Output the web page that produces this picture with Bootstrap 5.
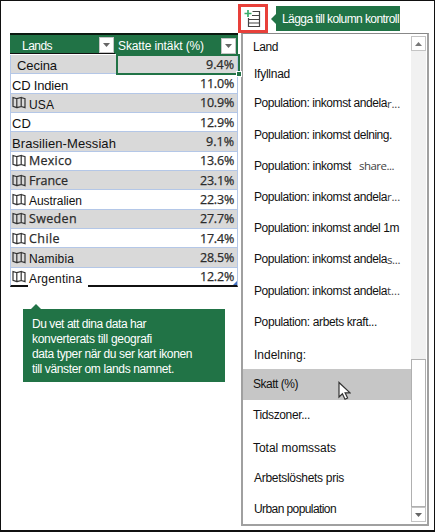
<!DOCTYPE html>
<html lang="sv">
  <head>
    <meta charset="UTF-8" />
    <meta name="viewport" content="width=device-width, initial-scale=1" />
    <title>Lands</title>
    <link
      href="https://cdn.jsdelivr.net/npm/bootstrap@5.3.3/dist/css/bootstrap.min.css"
      rel="stylesheet"
    />
    <style>
      body {
        width: 435px;
        height: 532px;
        font-family: "Liberation Sans", Arial, sans-serif;
        font-size: 12px;
        line-height: 1.2;
        color: #111;
        background: #fff;
      }

      .frame {
        width: 435px;
        height: 532px;
        border: 1px solid #111;
        border-bottom-width: 2px;
      }

      .green {
        background-color: #217346;
        color: #fff;
      }

      [data-w] {
        display: inline-block;
        white-space: pre;
      }

      /* top bar */
      .topbar {
        height: 32px;
        padding: 3px 0 0 237px;
      }

      .add-column {
        width: 30px;
        height: 29px;
        border: 3px solid #e8403a;
      }

      .arrow-left {
        border: 5px solid transparent;
        border-right: 5px solid #217346;
        border-left: 0;
        margin-left: 3px;
      }

      .tip-top {
        width: 124px;
        height: 25px;
        padding: 2px 0 0 6px;
      }

      /* table */
      .sheet {
        width: 228px;
        margin-left: 9px;
      }

      .sheet-head {
        height: 21px;
        border-top: 2px solid #0b1a11;
        margin-bottom: 1px;
      }

      .head-name {
        width: 105px;
        padding: 2px 1px 0 12px;
        border-bottom: 1px solid #111;
      }

      .head-value {
        width: 123px;
        padding: 2px 2px 0 3px;
      }

      .head-name span,
      .head-value span {
        padding-top: 2px;
      }

      .filter-btn {
        width: 15px;
        height: 16px;
        background: #fff;
        border: 1px solid #c5c5c5;
      }

      .sheet-row {
        height: 19.35px;
        border: 1px solid #b4c7e7;
        border-top: 0;
        padding: 0 3px 0 1px;
      }

      .sheet-row:nth-child(even) {
        background: #d9d9d9;
      }

      .sheet-row:last-child {
        border-bottom: 2px solid #111;
      }

      .sheet-row .office,
      .sheet-row .value {
        font-family: "Open Sans", "Noto Sans", sans-serif;
        font-size: 12.5px;
        color: #2b2b2b;
        -webkit-text-stroke: 0.25px #2b2b2b;
      }

      .big-name {
        font-size: 13px;
      }

      .map-icon {
        width: 14px;
        height: 13px;
        margin-right: 3px;
      }

      .push-down {
        padding-top: 4px;
      }

      .first-name {
        padding-left: 5px;
      }

      .active-cell {
        left: 105px;
        top: -1px;
        width: 124px;
        height: 21px;
        border: 2px solid #217346;
      }

      .cell-handle {
        right: -4px;
        bottom: -4px;
        width: 6px;
        height: 6px;
        border: 1px solid #fff;
        background: #217346;
      }

      .range-corner {
        right: 0;
        bottom: 0;
        border: 2px solid #4472c4;
        border-top-color: transparent;
        border-left-color: transparent;
      }

      /* name that runs over the table's bottom rule */
      .over-rule {
        left: 17px;
        top: 3px;
        width: 60px;
        height: 18px;
        padding: 1px 0 0 1px;
        background: #fff;
      }

      .arrow-up {
        width: 0;
        border: 5px solid transparent;
        border-bottom: 5px solid #217346;
        border-top: 0;
        margin: 17px 0 0 22px;
      }

      .tip-map {
        width: 202px;
        height: 73px;
        margin-left: 14px;
        padding: 8px 0 0 9px;
        line-height: 15px;
      }

      /* field list */
      .fields {
        width: 188px;
        height: 493px;
        margin-left: 3px;
        border: 2px solid #a0a0a0;
        border-top: 1px solid #888;
      }

      .field-item {
        height: 31.2px;
        padding-left: 11px;
      }

      .field-first {
        height: 26px;
        padding-left: 10px;
      }

      .field-second {
        height: 28px;
      }

      .field-low {
        padding-left: 10px;
      }

      .field-selected {
        background: #c6c6c6;
      }

      .cut-off {
        font-family: "Open Sans", "Noto Sans", sans-serif;
        font-size: 11.5px;
        color: #444;
      }

      .scroll-track {
        width: 15px;
        margin: 2px 1px 2px 0;
        background: #f1f1f1;
      }

      .scroll-btn {
        height: 15px;
        background: #fff;
        border: 1px solid #c4c4c4;
      }

      .scroll-thumb {
        height: 148px;
        background: #fff;
        border: 1px solid #b0b0b0;
      }

      .pointer {
        left: 337px;
        top: 380px;
      }
    </style>
  </head>
  <body>
    <svg class="d-none">
      <symbol id="map" viewBox="0 0 14 13">
        <path
          d="M1 1.5 4.8 2.6v9L1 10.4zM4.8 2.6 9.2 1.5v9L4.8 11.6M9.2 1.5 13 2.6v9l-3.8-1.1"
          fill="none"
          stroke="#333"
          stroke-width="1.2"
        />
      </symbol>
    </svg>

    <div class="frame position-relative">
      <div class="topbar d-flex">
        <div class="add-column d-flex align-items-center justify-content-center">
          <svg width="18" height="19" viewBox="0 0 18 19" fill="none">
            <path
              d="M8.5 2.5H15.5V17.5H4.5V9M8 6.5h7.5M4.5 10.5h11M4.5 14h11"
              stroke="#444"
              stroke-width="1.2"
            />
            <path d="M4 1v7M0.5 4.5h7" stroke="#3aae6b" stroke-width="1.7" />
          </svg>
        </div>
        <div class="d-flex align-items-center">
          <div class="arrow-left"></div>
          <div class="tip-top green d-flex align-items-center">
            <span data-w="117">Lägga till kolumn kontroll</span>
          </div>
        </div>
      </div>

      <div class="d-flex align-items-start">
        <div>
          <div class="sheet">
            <div class="sheet-head green d-flex">
              <div class="head-name d-flex justify-content-between align-items-center">
                <span data-w="30">Lands</span>
                <div class="filter-btn d-flex align-items-center justify-content-center">
                  <svg width="7" height="4"><path d="M0 0h7L3.5 4z" fill="#666" /></svg>
                </div>
              </div>
              <div class="head-value d-flex justify-content-between align-items-center">
                <span data-w="86">Skatte intäkt (%)</span>
                <div class="filter-btn d-flex align-items-center justify-content-center">
                  <svg width="7" height="4"><path d="M0 0h7L3.5 4z" fill="#666" /></svg>
                </div>
              </div>
            </div>

            <div class="sheet-row position-relative d-flex align-items-center">
              <div class="flex-grow-1 first-name push-down"><span class="big-name" data-w="40">Cecina</span></div>
              <span class="value" data-w="28">9.4%</span>
              <div class="active-cell position-absolute">
                <div class="cell-handle position-absolute"></div>
              </div>
            </div>
            <div class="sheet-row d-flex align-items-center">
              <div class="flex-grow-1 push-down"><span class="big-name" data-w="56">CD Indien</span></div>
              <span class="value" data-w="34">11.0%</span>
            </div>
            <div class="sheet-row d-flex align-items-center">
              <svg class="map-icon"><use href="#map" /></svg>
              <div class="flex-grow-1 push-down"><span data-w="25">USA</span></div>
              <span class="value" data-w="34">10.9%</span>
            </div>
            <div class="sheet-row d-flex align-items-center">
              <div class="flex-grow-1 push-down"><span class="big-name" data-w="19">CD</span></div>
              <span class="value" data-w="34">12.9%</span>
            </div>
            <div class="sheet-row d-flex align-items-center">
              <div class="flex-grow-1 push-down"><span class="big-name" data-w="104">Brasilien-Messiah</span></div>
              <span class="value" data-w="28">9.1%</span>
            </div>
            <div class="sheet-row d-flex align-items-center">
              <svg class="map-icon"><use href="#map" /></svg>
              <div class="flex-grow-1 office"><span data-w="43">Mexico</span></div>
              <span class="value" data-w="34">13.6%</span>
            </div>
            <div class="sheet-row d-flex align-items-center">
              <svg class="map-icon"><use href="#map" /></svg>
              <div class="flex-grow-1 office"><span data-w="39">France</span></div>
              <span class="value" data-w="34">23.1%</span>
            </div>
            <div class="sheet-row d-flex align-items-center">
              <svg class="map-icon"><use href="#map" /></svg>
              <div class="flex-grow-1 push-down"><span data-w="53">Australien</span></div>
              <span class="value" data-w="34">22.3%</span>
            </div>
            <div class="sheet-row d-flex align-items-center">
              <svg class="map-icon"><use href="#map" /></svg>
              <div class="flex-grow-1 office"><span data-w="48">Sweden</span></div>
              <span class="value" data-w="34">27.7%</span>
            </div>
            <div class="sheet-row d-flex align-items-center">
              <svg class="map-icon"><use href="#map" /></svg>
              <div class="flex-grow-1 office"><span data-w="31">Chile</span></div>
              <span class="value" data-w="34">17.4%</span>
            </div>
            <div class="sheet-row d-flex align-items-center">
              <svg class="map-icon"><use href="#map" /></svg>
              <div class="flex-grow-1 push-down"><span data-w="45">Namibia</span></div>
              <span class="value" data-w="34">28.5%</span>
            </div>
            <div class="sheet-row position-relative d-flex align-items-center">
              <svg class="map-icon"><use href="#map" /></svg>
              <div class="over-rule position-absolute"><span data-w="53">Argentina</span></div>
              <span class="value ms-auto" data-w="34">12.2%</span>
              <div class="range-corner position-absolute"></div>
            </div>
          </div>

          <div class="ps-2">
            <div class="arrow-up"></div>
            <div class="tip-map green">
              <div><span data-w="114">Du vet att dina data har</span></div>
              <div><span data-w="120">konverterats till geografi</span></div>
              <div><span data-w="160">data typer när du ser kart ikonen</span></div>
              <div><span data-w="142">till vänster om lands namnet.</span></div>
            </div>
          </div>
        </div>

        <div class="fields d-flex">
          <div class="flex-grow-1">
            <div class="field-item field-first d-flex align-items-center"><span data-w="25">Land</span></div>
            <div class="field-item field-second d-flex align-items-center"><span data-w="36">Ifyllnad</span></div>
            <div class="field-item d-flex align-items-center"><span data-w="133">Population: inkomst andela</span><span class="cut-off" data-w="13">r...</span></div>
            <div class="field-item d-flex align-items-center"><span data-w="138">Population: inkomst delning.</span></div>
            <div class="field-item d-flex align-items-center"><span data-w="97">Population: inkomst</span><span class="cut-off ms-2" data-w="35">share...</span></div>
            <div class="field-item d-flex align-items-center"><span data-w="133">Population: inkomst andela</span><span class="cut-off" data-w="13">r...</span></div>
            <div class="field-item d-flex align-items-center"><span data-w="145">Population: inkomst andel 1m</span></div>
            <div class="field-item d-flex align-items-center"><span data-w="133">Population: inkomst andela</span><span class="cut-off" data-w="13">s...</span></div>
            <div class="field-item d-flex align-items-center"><span data-w="133">Population: inkomst andela</span><span class="cut-off" data-w="13">t...</span></div>
            <div class="field-item d-flex align-items-center"><span data-w="123">Population: arbets kraft...</span></div>
            <div class="field-item d-flex align-items-center pt-1"><span data-w="52">Indelning:</span></div>
            <div class="field-item field-low field-selected d-flex align-items-center"><span data-w="45">Skatt (%)</span></div>
            <div class="field-item field-low d-flex align-items-center"><span data-w="57">Tidszoner...</span></div>
            <div class="field-item field-low d-flex align-items-center pt-1"><span data-w="83">Total momssats</span></div>
            <div class="field-item d-flex align-items-center"><span data-w="90">Arbetslöshets pris</span></div>
            <div class="field-item d-flex align-items-center"><span data-w="82">Urban population</span></div>
          </div>
          <div class="scroll-track d-flex flex-column">
            <div class="scroll-btn d-flex align-items-center justify-content-center">
              <svg width="7" height="4"><path d="M0 4h7L3.5 0z" fill="#777" /></svg>
            </div>
            <div class="scroll-thumb mt-auto"></div>
            <div class="scroll-btn d-flex align-items-center justify-content-center">
              <svg width="7" height="4"><path d="M0 0h7L3.5 4z" fill="#666" /></svg>
            </div>
          </div>
        </div>
      </div>

      <svg class="pointer position-absolute" width="13" height="20" viewBox="0 0 13 20">
        <path
          d="M1 1.5v14.5l3.4-3.2 2.6 5.4 2.6-1.2-2.5-5.2H12z"
          fill="#fff"
          stroke="#333"
          stroke-width="1.2"
        />
      </svg>
    </div>

    <script src="https://cdn.jsdelivr.net/npm/bootstrap@5.3.3/dist/js/bootstrap.bundle.min.js"></script>
    <script>
      // spread every label over its own width
      document.querySelectorAll("[data-w]").forEach((label) => {
        const range = document.createRange();
        range.selectNodeContents(label);
        const natural = range.getBoundingClientRect().width;
        const gap = (label.dataset.w - natural) / label.textContent.length;
        label.style.letterSpacing = gap + "px";
      });
    </script>
  </body>
</html>
